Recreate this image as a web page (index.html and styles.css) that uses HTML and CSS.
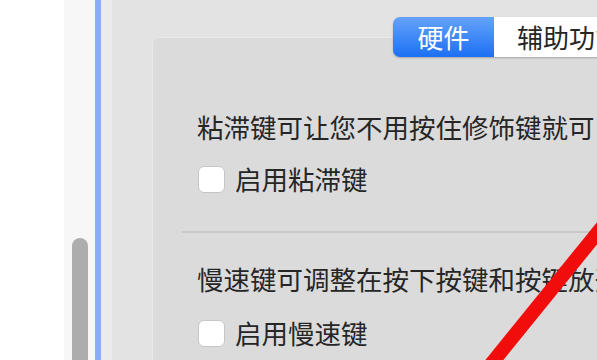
FILE: index.html
```html
<!DOCTYPE html>
<html lang="zh-CN">
<head>
<meta charset="utf-8">
<link rel="stylesheet" href="styles.css">
</head>
<body>
<div class="page">
  <div class="blank"></div>
  <div class="sidebar"><div class="thumb"></div></div>
  <div class="accent"></div>
  <div class="main">
    <div class="group">
      <div class="seg">
        <div class="seg-item active">硬件</div>
        <div class="seg-item">辅助功能</div>
      </div>
      <div class="section">
        <p class="desc">粘滞键可让您不用按住修饰键就可以使用组合键。</p>
        <label class="check"><span class="box"></span><span>启用粘滞键</span></label>
      </div>
      <div class="sep"></div>
      <div class="section second">
        <p class="desc">慢速键可调整在按下按键和按键放开之间的时间。</p>
        <label class="check"><span class="box"></span><span>启用慢速键</span></label>
      </div>
    </div>
  </div>
  <svg class="mark" width="597" height="360" viewBox="0 0 597 360">
    <line x1="462" y1="400" x2="624" y2="200" stroke="#f20d0d" stroke-width="14"/>
  </svg>
</div>
</body>
</html>
```
FILE: styles.css
```css
html, body {
  margin: 0;
  padding: 0;
  background: #ffffff;
}
.page {
  position: relative;
  width: 597px;
  height: 360px;
  overflow: hidden;
  display: flex;
  font-family: "Noto Sans CJK SC", "Noto Sans", sans-serif;
  color: #262626;
}
.blank {
  width: 64px;
  flex: none;
  background: #ffffff;
}
.sidebar {
  width: 31px;
  flex: none;
  background: #f7f7f7;
  padding: 238px 0 0 8px;
  box-sizing: border-box;
}
.thumb {
  width: 16px;
  height: 200px;
  border-radius: 8px;
  background: #adadad;
}
.accent {
  width: 6px;
  flex: none;
  background: #8aaff0;
}
.main {
  flex: 1;
  background: #e3e3e3;
  border-left: 11px solid #ebebeb;
  padding: 37px 0 0 40px;
  min-width: 0;
}
.group {
  width: 560px;
  height: 400px;
  background: #dbdbdb;
  border: 1px solid #e8e8e8;
  border-right: none;
  border-radius: 6px 0 0 0;
  box-sizing: border-box;
}
.seg {
  display: flex;
  margin: -21px 0 0 240px;
  height: 40px;
  width: max-content;
  border-radius: 7px;
  box-shadow: 0 1px 2px rgba(0,0,0,0.25);
  overflow: hidden;
}
.seg-item {
  font-size: 26px;
  line-height: 40px;
  padding: 0 23px 0 23px;
  background: #ffffff;
  color: #262626;
}
.seg-item.active {
  width: 101px;
  padding: 0;
  text-align: center;
  box-sizing: border-box;
  color: #ffffff;
  background: linear-gradient(#65a3f9, #1c6ff4);
}
.section {
  padding-left: 44px;
}
.desc {
  margin: 54px 0 0 0;
  font-size: 26.5px;
  line-height: 32px;
  white-space: nowrap;
}
.check {
  display: flex;
  align-items: center;
  gap: 10px;
  margin-top: 22px;
  height: 28px;
  font-size: 26.5px;
  line-height: 32px;
  padding-left: 1px;
}
.box {
  width: 27px;
  height: 27px;
  box-sizing: border-box;
  background: #ffffff;
  border: 1px solid #c6c6c6;
  border-radius: 6px;
  flex: none;
}
.sep {
  margin: 38px 0 0 29px;
  height: 2px;
  background: #c8c8c8;
}
.second .desc {
  margin-top: 30px;
}
.second .check {
  margin-top: 24px;
}
.mark {
  position: absolute;
  left: 0;
  top: 0;
  pointer-events: none;
}
```
